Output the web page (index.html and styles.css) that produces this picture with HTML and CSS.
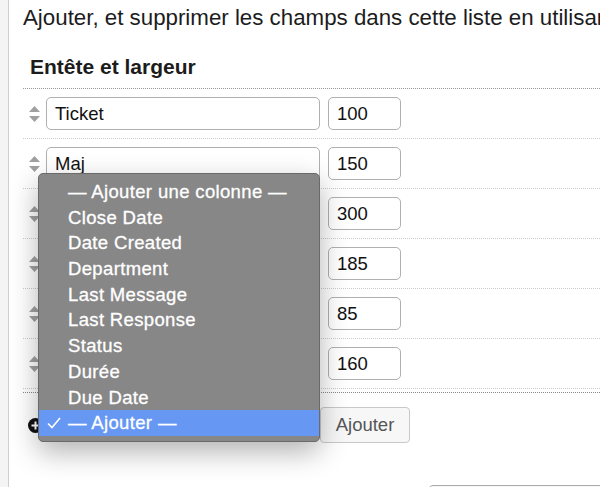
FILE: index.html
```html
<!DOCTYPE html>
<html lang="fr">
<head>
<meta charset="UTF-8">
<meta name="viewport" content="width=device-width, initial-scale=1.0">
<title>Colonnes</title>
<link rel="stylesheet" href="styles.css">
</head>
<body>

<div class="page">
    <div class="edge"></div>

    <div class="content">
        <p class="intro">Ajouter, et supprimer les champs dans cette liste en utilisant</p>

        <div class="fields">
            <h3>Entête et largeur</h3>

            <!-- one row per column -->
            <div class="row">
                <svg class="handle" width="13" height="16" viewBox="0 0 13 16"><path d="M6.5 0 L12 6 L1 6 Z M1 10 L12 10 L6.5 16 Z" fill="#a0a0a0"/></svg>
                <input class="name" type="text" value="Ticket">
                <input class="width" type="text" value="100">
            </div>
            <div class="row">
                <svg class="handle" width="13" height="16" viewBox="0 0 13 16"><path d="M6.5 0 L12 6 L1 6 Z M1 10 L12 10 L6.5 16 Z" fill="#a0a0a0"/></svg>
                <input class="name" type="text" value="Maj">
                <input class="width" type="text" value="150">
            </div>
            <div class="row">
                <svg class="handle" width="13" height="16" viewBox="0 0 13 16"><path d="M6.5 0 L12 6 L1 6 Z M1 10 L12 10 L6.5 16 Z" fill="#a0a0a0"/></svg>
                <input class="name" type="text" value="Sujet">
                <input class="width" type="text" value="300">
            </div>
            <div class="row">
                <svg class="handle" width="13" height="16" viewBox="0 0 13 16"><path d="M6.5 0 L12 6 L1 6 Z M1 10 L12 10 L6.5 16 Z" fill="#a0a0a0"/></svg>
                <input class="name" type="text" value="De">
                <input class="width" type="text" value="185">
            </div>
            <div class="row">
                <svg class="handle" width="13" height="16" viewBox="0 0 13 16"><path d="M6.5 0 L12 6 L1 6 Z M1 10 L12 10 L6.5 16 Z" fill="#a0a0a0"/></svg>
                <input class="name" type="text" value="Priorité">
                <input class="width" type="text" value="85">
            </div>
            <div class="row">
                <svg class="handle" width="13" height="16" viewBox="0 0 13 16"><path d="M6.5 0 L12 6 L1 6 Z M1 10 L12 10 L6.5 16 Z" fill="#a0a0a0"/></svg>
                <input class="name" type="text" value="Assigné à">
                <input class="width" type="text" value="160">
            </div>

            <div class="footer">
                <svg class="plus" width="15" height="15" viewBox="0 0 15 15"><circle cx="7.5" cy="7.5" r="7.5" fill="#111"/><path d="M7.5 3.5 V11.5 M3.5 7.5 H11.5" stroke="#fff" stroke-width="2"/></svg>
                <div class="select-box"></div>
                <button class="add-btn">Ajouter</button>
            </div>
        </div>

        <div class="actions">
            <div class="save-box"></div>
        </div>
    </div>
</div>

<!-- open select menu -->
<ul class="menu">
    <li>— Ajouter une colonne —</li>
    <li>Close Date</li>
    <li>Date Created</li>
    <li>Department</li>
    <li>Last Message</li>
    <li>Last Response</li>
    <li>Status</li>
    <li>Durée</li>
    <li>Due Date</li>
    <li class="selected">
        <svg class="check" width="14" height="12" viewBox="0 0 14 12"><path d="M1 6.5 L5 10.5 L13 1" fill="none" stroke="#fff" stroke-width="1.6"/></svg>
        — Ajouter —
    </li>
</ul>

</body>
</html>
```

FILE: styles.css
```css
body {
    font-family: "Liberation Sans", Arial, sans-serif;
    margin: 0;
    padding: 0;
    background-color: #fff;
    color: #1c1c1c;
    overflow: hidden;
}

.page {
    display: flex;
    min-height: 100vh;
}

.edge {
    width: 8px;
    flex-shrink: 0;
    background: #f4f4f4;
    border-right: 1px solid #cfcfcf;
}

.content {
    flex: 1;
    padding: 3px 0 0 14px;
    min-width: 0;
    overflow: hidden;
}

.intro {
    margin: 0;
    font-size: 22.3px;
    line-height: 30px;
    white-space: nowrap;
}

.fields {
    margin-top: 20px;
}

.fields h3 {
    margin: 0;
    padding: 0 0 7px 7px;
    font-size: 21px;
    line-height: 28px;
    font-weight: bold;
    border-bottom: 1px dotted #999;
}

.row {
    display: flex;
    align-items: center;
    padding: 8px 0 8px 5px;
    border-bottom: 1px dotted #ccc;
}

.handle {
    flex-shrink: 0;
    margin-right: 5px;
}

.row input {
    box-sizing: border-box;
    height: 33px;
    border: 1px solid #b0b0b0;
    border-radius: 5px;
    padding: 0 8px;
    font-family: inherit;
    font-size: 18.5px;
    color: #111;
    background: #fff;
}

.row input.name {
    width: 274px;
}

.row input.width {
    width: 73px;
    margin-left: 8px;
}

.footer {
    display: flex;
    align-items: center;
    gap: 4px;
    margin-top: 3px;
    padding: 14px 0 0 5px;
    border-top: 1px dotted #888;
}

.select-box {
    box-sizing: border-box;
    width: 269px;
    height: 30px;
    border: 1px solid #b0b0b0;
    border-radius: 5px;
}

.add-btn {
    box-sizing: border-box;
    width: 90px;
    height: 36px;
    border: 1px solid #c8c8c8;
    border-radius: 4px;
    background: #f7f7f7;
    color: #555;
    font-family: inherit;
    font-size: 18.5px;
    padding: 0;
}

.actions {
    margin-top: 42px;
}

.save-box {
    margin-left: 405px;
    width: 200px;
    height: 36px;
    border: 1px solid #aaa;
    border-radius: 5px;
    background: #f7f7f7;
}

.menu {
    position: absolute;
    left: 38px;
    top: 173px;
    box-sizing: border-box;
    width: 282px;
    margin: 0;
    padding: 5px 0;
    list-style: none;
    background: #878787;
    border: 1px solid #6a6a6a;
    border-radius: 5px;
    box-shadow: 0 10px 28px rgba(0,0,0,0.3);
}

.menu li {
    position: relative;
    height: 25.7px;
    line-height: 25.7px;
    padding-left: 29px;
    color: #fff;
    font-size: 18.5px;
    letter-spacing: 0.35px;
    -webkit-text-stroke: 0.3px #fff;
    white-space: nowrap;
}

.menu li.selected {
    background: #6597f3;
}

.menu .check {
    position: absolute;
    left: 8px;
    top: 7px;
}
```
